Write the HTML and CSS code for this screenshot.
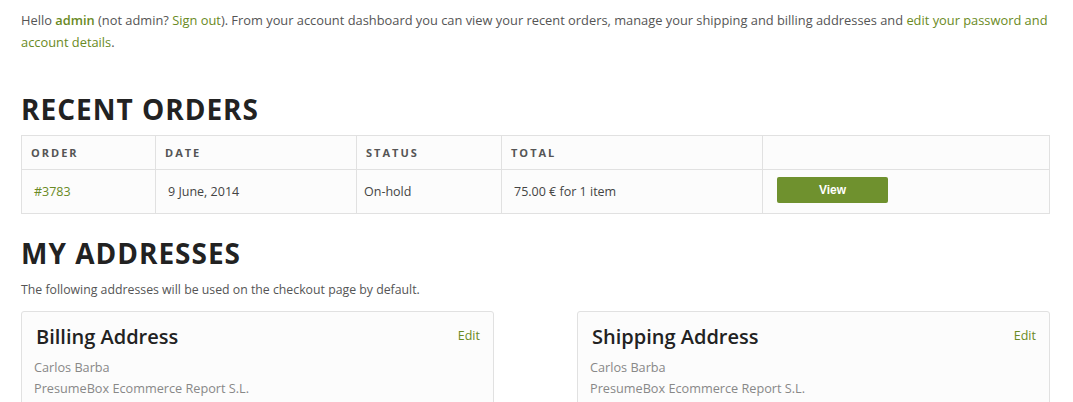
FILE: index.html
```html
<!DOCTYPE html>
<html>
<head>
<meta charset="utf-8">
<link rel="stylesheet" href="styles.css">
</head>
<body>
<div class="page">
  <p class="intro">Hello <a class="strong" href="#">admin</a> (not admin? <a href="#">Sign out</a>). From your account dashboard you can view your recent orders, manage your shipping and billing addresses and <a href="#">edit your password and account details</a>.</p>

  <h2 class="section-title orders-title">RECENT ORDERS</h2>
  <table class="orders">
    <thead>
      <tr>
        <th class="c-order">ORDER</th>
        <th class="c-date">DATE</th>
        <th class="c-status">STATUS</th>
        <th class="c-total">TOTAL</th>
        <th class="c-act"></th>
      </tr>
    </thead>
    <tbody>
      <tr>
        <td class="c-order"><a href="#">#3783</a></td>
        <td class="c-date">9 June, 2014</td>
        <td class="c-status">On-hold</td>
        <td class="c-total">75.00 € for 1 item</td>
        <td class="c-act"><a class="btn" href="#">View</a></td>
      </tr>
    </tbody>
  </table>

  <h2 class="section-title addr-title">MY ADDRESSES</h2>
  <p class="note">The following addresses will be used on the checkout page by default.</p>

  <div class="addresses">
    <div class="card">
      <div class="card-head">
        <h3>Billing Address</h3>
        <a href="#" class="edit">Edit</a>
      </div>
      <address>Carlos Barba<br>PresumeBox Ecommerce Report S.L.<br>Calle Mayor 1</address>
    </div>
    <div class="card">
      <div class="card-head">
        <h3>Shipping Address</h3>
        <a href="#" class="edit">Edit</a>
      </div>
      <address>Carlos Barba<br>PresumeBox Ecommerce Report S.L.<br>Calle Mayor 1</address>
    </div>
  </div>
</div>
</body>
</html>
```
FILE: styles.css
```css
* { box-sizing: border-box; }
html, body { margin: 0; padding: 0; background: #fff; }
body {
  font-family: "Open Sans", "Liberation Sans", sans-serif;
  color: #555;
  font-size: 13px;
}
a { color: #6a8a24; text-decoration: none; }
a.strong { font-weight: 600; }

.page {
  padding: 9px 23px 0 21px;
}
.intro {
  margin: 0;
  font-size: 12.85px;
  line-height: 22px;
  color: #555;
}
.section-title {
  margin: 0;
  font-size: 28px;
  font-weight: 700;
  letter-spacing: 1px;
  color: #222;
  line-height: 34px;
}
.orders-title { margin-top: 39px; }
.addr-title { margin-top: 22px; }

.orders {
  width: 100%;
  border-collapse: collapse;
  background: #fcfcfc;
  margin-top: 9px;
}
.orders th, .orders td {
  border: 1px solid #e1e1e1;
  text-align: left;
  vertical-align: middle;
}
.orders th {
  height: 34px;
  padding: 0 9px;
  font-size: 11px;
  font-weight: 700;
  letter-spacing: 2px;
  color: #555;
}
.orders td {
  height: 44px;
  padding: 0 12px;
  font-size: 12.5px;
  color: #444;
}
.orders th.c-order { width: 134px; }
.orders th.c-date { width: 201px; }
.orders th.c-status { width: 145px; }
.orders th.c-total { width: 261px; }
.orders td.c-status { padding-left: 7px; }
.orders td.c-act { padding: 0 14px 4px; }
.btn {
  display: inline-flex;
  align-items: center;
  justify-content: center;
  width: 111px;
  height: 26px;
  background: #6f912e;
  color: #fff;
  border-radius: 2px;
  font-family: "Liberation Sans", Arial, sans-serif;
  font-weight: 700;
  font-size: 12px;
}

.note {
  margin: 11px 0 0;
  font-size: 12.3px;
  line-height: 18px;
  color: #555;
}

.addresses {
  display: flex;
  justify-content: space-between;
  margin-top: 12px;
}
.card {
  width: 473px;
  background: #fcfcfc;
  border: 1px solid #e1e1e1;
  border-radius: 3px;
  padding: 10px 13px 12px 12px;
}
.card-head {
  display: flex;
  justify-content: space-between;
  align-items: flex-start;
}
.card h3 {
  margin: 0 0 0 2px;
  font-size: 20px;
  font-weight: 600;
  color: #222;
  line-height: 30px;
}
.edit {
  font-size: 12.5px;
  margin-top: 5px;
}
address {
  font-style: normal;
  font-size: 12.7px;
  line-height: 21px;
  color: #888;
  margin-top: 5px;
}
```
